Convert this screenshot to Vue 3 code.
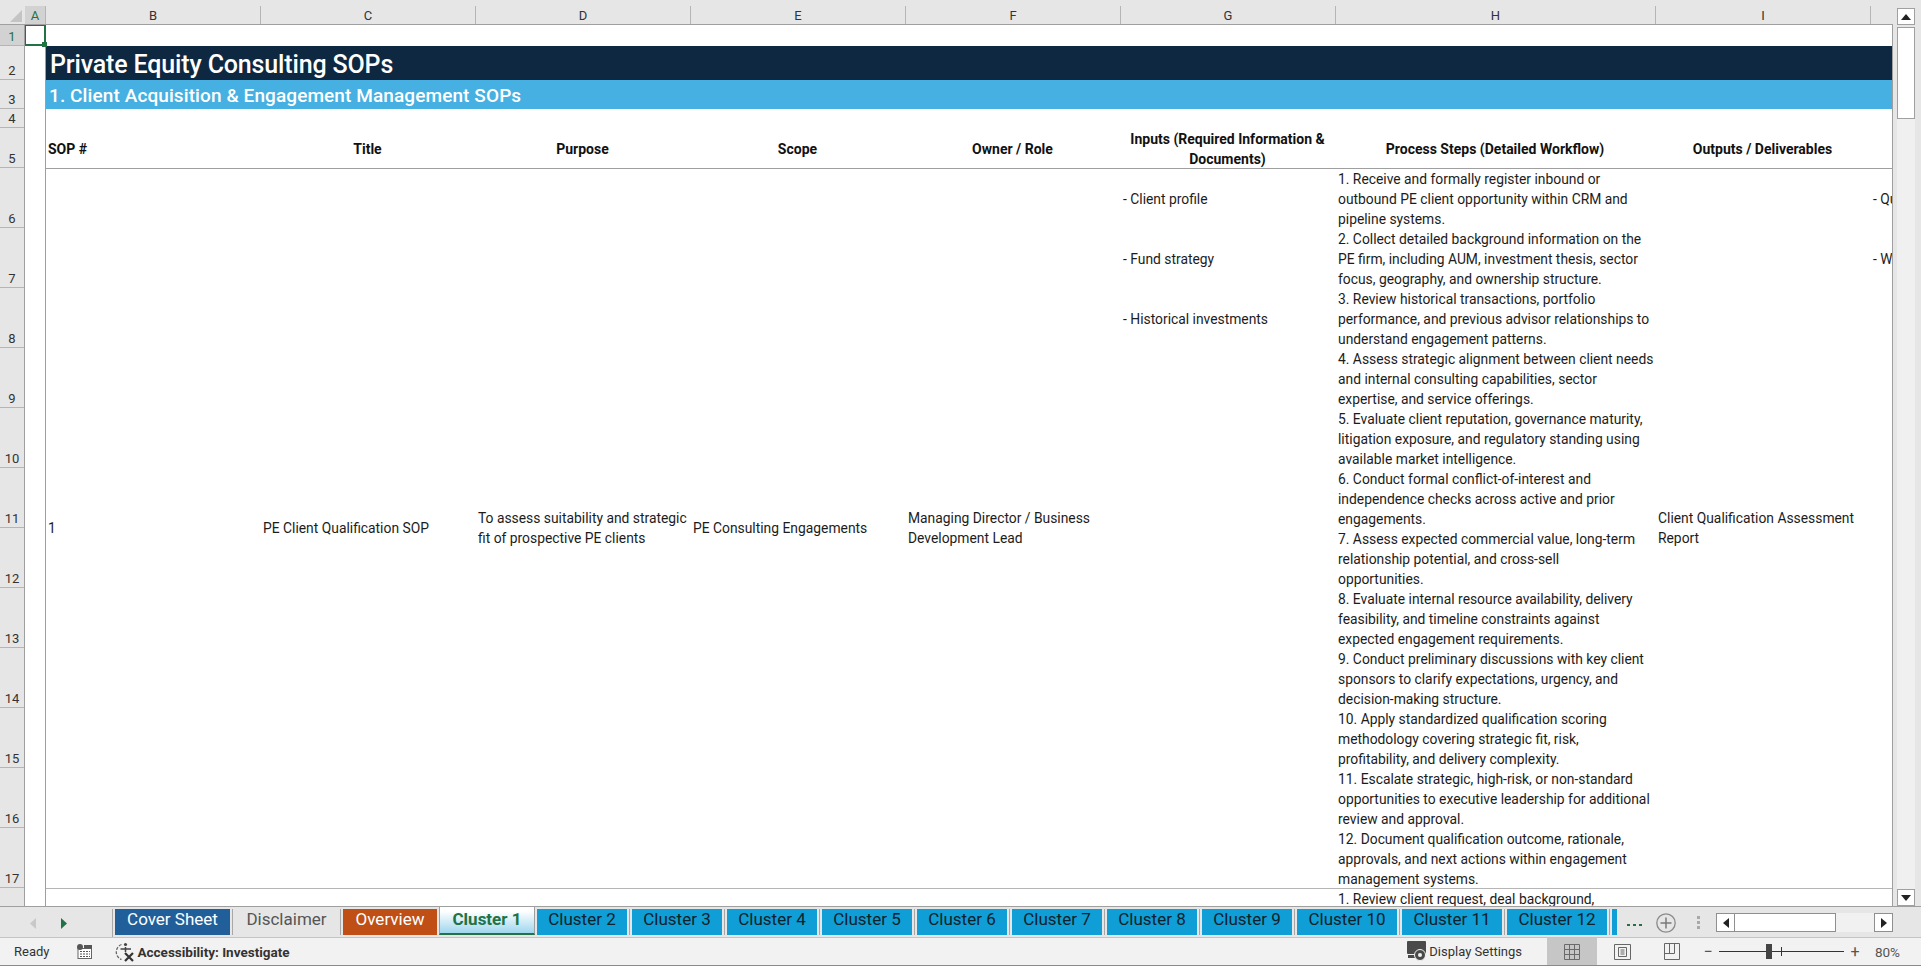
<template>
  <div class="excel">
    <div class="top">
      <div class="grid-area">
        <!-- column letters -->
        <div class="col-head">
          <div class="corner"><span class="corner-tri"></span></div>
          <div
            v-for="c in columns"
            :key="c.name"
            class="col-label"
            :class="{ on: c.name === 'A' }"
            :style="{ width: c.width + 'px' }"
          >{{ c.name }}</div>
        </div>

        <div class="body">
          <!-- row numbers -->
          <div class="row-head">
            <div
              v-for="r in rows"
              :key="r.n"
              class="row-label"
              :class="{ on: r.n === 1 }"
              :style="{ height: r.h + 'px' }"
            >{{ r.n }}</div>
          </div>

          <div class="sheet">
            <div class="selected"><span class="handle"></span></div>

            <div class="spacer-a"></div>
            <div class="main">
              <div class="gap-top"></div>
              <div class="title">Private Equity Consulting SOPs</div>
              <div class="subtitle">1. Client Acquisition &amp; Engagement Management SOPs</div>
              <div class="gap-mid"></div>

              <div class="table-head">
                <div class="th left">SOP #</div>
                <div class="th">Title</div>
                <div class="th">Purpose</div>
                <div class="th">Scope</div>
                <div class="th">Owner / Role</div>
                <div class="th">Inputs (Required Information &amp; Documents)</div>
                <div class="th">Process Steps (Detailed Workflow)</div>
                <div class="th">Outputs / Deliverables</div>
                <div class="th"></div>
              </div>

              <div class="record">
                <div class="td">1</div>
                <div class="td">PE Client Qualification SOP</div>
                <div class="td nowrap">To assess suitability and strategic<br />fit of prospective PE clients</div>
                <div class="td">PE Consulting Engagements</div>
                <div class="td">Managing Director / Business Development Lead</div>
                <div class="td stack">
                  <div v-for="i in inputs" :key="i" class="stack-row">{{ i }}</div>
                </div>
                <div class="td steps">
                  <div v-for="(l, idx) in steps" :key="idx" class="step-line">{{ l }}</div>
                </div>
                <div class="td">Client Qualification Assessment Report</div>
                <div class="td stack clip">
                  <div v-for="o in outputs" :key="o" class="stack-row">{{ o }}</div>
                </div>
              </div>

              <div class="record next">
                <div class="td steps-next">1. Review client request, deal background,</div>
              </div>
            </div>
          </div>
        </div>
      </div>

      <!-- vertical scrollbar -->
      <div class="vscroll">
        <div class="vbtn"><svg width="10" height="6" viewBox="0 0 10 6"><path d="M5 0 L10 6 H0 Z" fill="#222" /></svg></div>
        <div class="vthumb"></div>
        <div class="vtrack"></div>
        <div class="vbtn"><svg width="10" height="6" viewBox="0 0 10 6"><path d="M0 0 H10 L5 6 Z" fill="#222" /></svg></div>
      </div>
    </div>

    <!-- sheet tabs -->
    <div class="tabbar">
      <div class="tab-nav">
        <svg width="6" height="11" viewBox="0 0 6 11"><path d="M6 0 V11 L0 5.5 Z" fill="#c8c8c8" /></svg>
        <svg width="6" height="11" viewBox="0 0 6 11"><path d="M0 0 V11 L6 5.5 Z" fill="#217346" /></svg>
      </div>
      <div class="tabs">
        <div
          v-for="t in tabs"
          :key="t.name"
          class="tab"
          :class="t.kind"
          :style="{ width: t.width + 'px' }"
        >{{ t.name }}</div>
        <div class="tab sliver"></div>
      </div>
      <div class="ellipsis"><i></i><i></i><i></i></div>
      <svg class="add" width="20" height="20" viewBox="0 0 20 20">
        <circle cx="10" cy="10" r="9.2" fill="none" stroke="#8a8a8a" stroke-width="1.3" />
        <path d="M10 4.5 V15.5 M4.5 10 H15.5" stroke="#7a7a7a" stroke-width="1.5" />
      </svg>
      <div class="dots"><i></i><i></i><i></i></div>
      <div class="hscroll">
        <div class="hbtn"><svg width="6" height="10" viewBox="0 0 6 10"><path d="M6 0 V10 L0 5 Z" fill="#222" /></svg></div>
        <div class="hthumb"></div>
        <div class="htrack"></div>
        <div class="hbtn"><svg width="6" height="10" viewBox="0 0 6 10"><path d="M0 0 V10 L6 5 Z" fill="#222" /></svg></div>
      </div>
    </div>

    <!-- status bar -->
    <div class="status">
      <span class="ready">Ready</span>
      <svg class="macro" width="15" height="15" viewBox="0 0 15 15">
        <rect x="1" y="4.5" width="13.5" height="10" fill="#fff" stroke="#666" />
        <circle cx="3" cy="3" r="3" fill="#555" />
        <rect x="7" y="1" width="8" height="3.5" fill="#555" />
        <path d="M3 7.5 H13 M3 10 H13 M3 12.5 H13" stroke="#555" stroke-dasharray="2 1" />
      </svg>
      <svg class="access" width="21" height="20" viewBox="0 0 21 20">
        <path d="M6.5 2.5 A8 8 0 0 0 6.5 17.5" fill="none" stroke="#666" stroke-width="1.3" stroke-dasharray="3 1.4" />
        <circle cx="10.5" cy="2.5" r="1.6" fill="#444" />
        <path d="M5.5 7 H16 M10.5 5 V10" stroke="#444" stroke-width="1.5" />
        <path d="M10 11 L18 19 M18 11 L10 19" stroke="#333" stroke-width="2.2" />
      </svg>
      <span class="access-text">Accessibility: Investigate</span>

      <div class="status-right">
        <svg class="display" width="20" height="21" viewBox="0 0 20 21">
          <rect x="0" y="0" width="19" height="13" rx="1" fill="#4a4a4a" />
          <rect x="1" y="14" width="7" height="3" fill="#4a4a4a" />
          <circle cx="13" cy="14" r="5.5" fill="#4a4a4a" stroke="#f2f2f2" />
          <circle cx="13" cy="14" r="2" fill="#f2f2f2" />
        </svg>
        <span class="display-text">Display Settings</span>
        <div class="view on">
          <svg width="16" height="16" viewBox="0 0 16 16"><path d="M.5.5h15v15H.5zM5.5.5v15M10.5.5v15M.5 5.5h15M.5 10.5h15" fill="none" stroke="#6a6a6a" /></svg>
        </div>
        <div class="view">
          <svg width="17" height="16" viewBox="0 0 17 16"><path d="M.5.5h16v15H.5z" fill="none" stroke="#666" /><path d="M4.5 3.5h8v9h-8zM6.5 6h4M6.5 8h4M6.5 10h4" fill="none" stroke="#666" /></svg>
        </div>
        <div class="view">
          <svg width="16" height="17" viewBox="0 0 16 17"><path d="M.5.5h15v16H.5zM.5 10.5h10M5.5.5v10M10.5.5v10" fill="none" stroke="#666" /></svg>
        </div>
        <div class="zoom-slider">
          <span class="zbtn">&minus;</span>
          <div class="ztrack"><span class="ztick"></span><span class="zthumb"></span></div>
          <span class="zbtn">+</span>
        </div>
        <span class="zoom-val">80%</span>
      </div>
    </div>
  </div>
</template>

<script setup>
const columns = [
  { name: 'A', width: 21 },
  { name: 'B', width: 215 },
  { name: 'C', width: 215 },
  { name: 'D', width: 215 },
  { name: 'E', width: 215 },
  { name: 'F', width: 215 },
  { name: 'G', width: 215 },
  { name: 'H', width: 320 },
  { name: 'I', width: 215 }
]

const rows = [
  { n: 1, h: 21 },
  { n: 2, h: 34 },
  { n: 3, h: 29 },
  { n: 4, h: 19 },
  { n: 5, h: 40 },
  ...[6, 7, 8, 9, 10, 11, 12, 13, 14, 15, 16, 17].map((n) => ({ n, h: 60 }))
]

const inputs = ['- Client profile', '- Fund strategy', '- Historical investments']
const outputs = ['- Qualification', '- Win']

const steps = [
  '1. Receive and formally register inbound or',
  'outbound PE client opportunity within CRM and',
  'pipeline systems.',
  '2. Collect detailed background information on the',
  'PE firm, including AUM, investment thesis, sector',
  'focus, geography, and ownership structure.',
  '3. Review historical transactions, portfolio',
  'performance, and previous advisor relationships to',
  'understand engagement patterns.',
  '4. Assess strategic alignment between client needs',
  'and internal consulting capabilities, sector',
  'expertise, and service offerings.',
  '5. Evaluate client reputation, governance maturity,',
  'litigation exposure, and regulatory standing using',
  'available market intelligence.',
  '6. Conduct formal conflict-of-interest and',
  'independence checks across active and prior',
  'engagements.',
  '7. Assess expected commercial value, long-term',
  'relationship potential, and cross-sell',
  'opportunities.',
  '8. Evaluate internal resource availability, delivery',
  'feasibility, and timeline constraints against',
  'expected engagement requirements.',
  '9. Conduct preliminary discussions with key client',
  'sponsors to clarify expectations, urgency, and',
  'decision-making structure.',
  '10. Apply standardized qualification scoring',
  'methodology covering strategic fit, risk,',
  'profitability, and delivery complexity.',
  '11. Escalate strategic, high-risk, or non-standard',
  'opportunities to executive leadership for additional',
  'review and approval.',
  '12. Document qualification outcome, rationale,',
  'approvals, and next actions within engagement',
  'management systems.'
]

const tabs = [
  { name: 'Cover Sheet', width: 115, kind: 'navy' },
  { name: 'Disclaimer', width: 103, kind: 'plain' },
  { name: 'Overview', width: 94, kind: 'rust' },
  { name: 'Cluster 1', width: 96, kind: 'active' },
  ...[2, 3, 4, 5, 6, 7, 8, 9].map((n) => ({ name: 'Cluster ' + n, width: 90, kind: 'blue' })),
  { name: 'Cluster 10', width: 100, kind: 'blue' },
  { name: 'Cluster 11', width: 100, kind: 'blue' },
  { name: 'Cluster 12', width: 100, kind: 'blue' }
]
</script>

<style>
html, body {
  margin: 0;
  background: #fff;
  overflow: hidden;
}
</style>

<style scoped>
.excel {
  width: 1921px;
  height: 966px;
  display: flex;
  flex-direction: column;
  overflow: hidden;
  font-family: Roboto, "Liberation Sans", sans-serif;
  color: #1a1a1a;
}
.top {
  height: 906px;
  flex: none;
  display: flex;
}
.grid-area {
  width: 1893px;
  flex: none;
  display: flex;
  flex-direction: column;
}

/* ====== column letters ====== */
.col-head {
  height: 25px;
  flex: none;
  display: flex;
  padding-top: 6px;
  background: #e6e6e6;
  border-bottom: 1px solid #9f9f9f;
  box-sizing: border-box;
}
.corner {
  width: 25px;
  position: relative;
  flex: none;
}
.corner-tri {
  position: absolute;
  right: 3px;
  bottom: 2px;
  width: 0;
  height: 0;
  border-style: solid;
  border-width: 0 0 12px 12px;
  border-color: transparent transparent #c4c4c4 transparent;
}
.col-label {
  flex: none;
  box-sizing: border-box;
  border-right: 1px solid #b5b5b5;
  text-align: center;
  font-size: 13px;
  line-height: 19px;
  color: #333;
}
.col-label.on {
  background: #d2d2d2;
  color: #217346;
}

/* ====== body ====== */
.body {
  flex: 1;
  min-height: 0;
  display: flex;
  overflow: hidden;
}
.row-head {
  width: 25px;
  flex: none;
  background: #e6e6e6;
  border-right: 1px solid #9f9f9f;
  box-sizing: border-box;
  overflow: hidden;
}
.row-label {
  box-sizing: border-box;
  border-bottom: 1px solid #b5b5b5;
  display: flex;
  align-items: flex-end;
  justify-content: center;
  font-size: 13px;
  line-height: 16px;
  color: #333;
}
.row-label.on {
  background: #d2d2d2;
  color: #217346;
}

.sheet {
  flex: 1;
  min-width: 0;
  display: flex;
  position: relative;
  background: #fff;
  border-right: 1px solid #9f9f9f;
  box-sizing: border-box;
  overflow: hidden;
}
.selected {
  position: absolute;
  left: -1px;
  top: -1px;
  width: 22px;
  height: 22px;
  box-sizing: border-box;
  border: 2px solid #217346;
  z-index: 3;
}
.handle {
  position: absolute;
  right: -3px;
  bottom: -3px;
  width: 5px;
  height: 5px;
  background: #217346;
}
.spacer-a {
  width: 21px;
  flex: none;
  border-right: 1px solid #9f9f9f;
  box-sizing: border-box;
}
.main {
  flex: 1;
  min-width: 0;
  overflow: hidden;
}
.gap-top {
  height: 21px;
}
.title {
  height: 34px;
  background: #0e2841;
  color: #fff;
  font-size: 25px;
  font-weight: 500;
  line-height: 38px;
  padding-left: 4px;
  letter-spacing: -0.15px;
}
.subtitle {
  height: 29px;
  background: #45b0e1;
  color: #fff;
  font-size: 19px;
  font-weight: 500;
  line-height: 32px;
  padding-left: 3px;
  letter-spacing: 0.1px;
}
.gap-mid {
  height: 19px;
}

/* ====== table ====== */
.table-head,
.record {
  display: grid;
  grid-template-columns: repeat(6, 215px) 320px 215px 22px;
}
.table-head {
  height: 41px;
  border-bottom: 1px solid #9f9f9f;
  box-sizing: border-box;
}
.th {
  display: flex;
  align-items: center;
  justify-content: center;
  text-align: center;
  font-size: 14px;
  font-weight: 700;
  line-height: 20px;
  color: #111;
  padding: 1px 3px 0 1px;
}
.th.left {
  justify-content: flex-start;
  padding-left: 2px;
}
.record {
  height: 719px;
  border-bottom: 1px solid #b5b5b5;
}
.td {
  display: flex;
  align-items: center;
  font-size: 13.85px;
  line-height: 20px;
  padding: 0 2px 2px;
  color: #1c1c1c;
}
.nowrap {
  display: block;
  align-self: center;
  white-space: nowrap;
}
.stack {
  display: block;
  padding-bottom: 0;
}
.stack-row {
  height: 60px;
  line-height: 60px;
  white-space: nowrap;
}
.clip {
  overflow: hidden;
}
.steps {
  display: block;
  padding-bottom: 0;
}
.step-line {
  height: 20px;
  white-space: nowrap;
}
.next {
  height: 18px;
}
.steps-next {
  grid-column: 7;
  height: 20px;
  white-space: nowrap;
}

/* ====== vertical scrollbar ====== */
.vscroll {
  flex: 1;
  background: #e6e6e6;
  display: flex;
  flex-direction: column;
  padding: 8px 6px 0 4px;
}
.vbtn {
  height: 17px;
  flex: none;
  background: #fff;
  border: 1px solid #a0a0a0;
  box-sizing: border-box;
  display: flex;
  align-items: center;
  justify-content: center;
}
.vthumb {
  height: 92px;
  flex: none;
  background: #fff;
  border: 1px solid #a0a0a0;
  box-sizing: border-box;
  margin-top: 2px;
}
.vtrack {
  flex: 1;
  background: #f0f0f0;
}

/* ====== tabs ====== */
.tabbar {
  height: 32px;
  flex: none;
  box-sizing: border-box;
  display: flex;
  align-items: flex-start;
  background: #e6e6e6;
  border-top: 1px solid #9f9f9f;
  border-bottom: 1px solid #c4c4c4;
}
.tab-nav {
  width: 113px;
  flex: none;
  height: 28px;
  margin-top: 2px;
  display: flex;
  align-items: center;
  justify-content: center;
  gap: 25px;
  padding-right: 15px;
  box-sizing: border-box;
  border-right: 1px solid #a8a8a8;
}
.tabs {
  display: flex;
  flex: none;
  width: 1504px;
  overflow: hidden;
  height: 30px;
  padding: 2px 0 0 2px;
  box-sizing: border-box;
}
.tab {
  flex: none;
  height: 26px;
  box-sizing: border-box;
  text-align: center;
  font-size: 17px;
  line-height: 20px;
  margin-right: 5px;
  position: relative;
}
.tab::after {
  content: "";
  position: absolute;
  right: -3px;
  top: 0;
  width: 1px;
  height: 26px;
  background: #a8a8a8;
}
.tab.navy { background: #215f9a; color: #fff; }
.tab.plain { color: #555; background: transparent; }
.tab.rust { background: #c04f15; color: #fff; margin-right: 2px; }
.tab.rust::after { display: none; }
.tab.blue { background: #0f9ed5; color: #10222c; }
.tab.active {
  background: linear-gradient(180deg, #fff 0, #fff 4px, #9fd6ee 100%);
  color: #217346;
  font-weight: 700;
  margin-top: -2px;
  margin-right: 2px;
  height: 28px;
  line-height: 24px;
  border-left: 1px solid #9f9f9f;
  border-right: 1px solid #9f9f9f;
  border-bottom: 2px solid #217346;
}
.tab.active::after { display: none; }
.tab.sliver {
  width: 20px;
  background: #0f9ed5;
}
.ellipsis {
  width: 34px;
  height: 30px;
  flex: none;
  display: flex;
  justify-content: center;
  align-items: flex-end;
  gap: 3px;
  padding-bottom: 11px;
  box-sizing: border-box;
}
.ellipsis i {
  width: 3px;
  height: 2px;
  background: #217346;
}
.add {
  flex: none;
  margin: 6px 21px 0 5px;
}
.dots {
  display: flex;
  flex-direction: column;
  gap: 2px;
  margin-top: 9px;
  flex: none;
}
.dots i {
  width: 3px;
  height: 3px;
  background: #a9a9a9;
}
.hscroll {
  flex: none;
  margin: 6px 0 0 16px;
  height: 19px;
  width: 177px;
  display: flex;
  background: #f1f1f1;
}
.hbtn {
  width: 19px;
  flex: none;
  background: #fff;
  border: 1px solid #8f8f8f;
  box-sizing: border-box;
  display: flex;
  align-items: center;
  justify-content: center;
}
.hthumb {
  width: 101px;
  flex: none;
  background: #fff;
  border: 1px solid #8f8f8f;
  border-left: 0;
  box-sizing: border-box;
}
.htrack {
  flex: 1;
}

/* ====== status bar ====== */
.status {
  flex: 1;
  display: flex;
  align-items: center;
  background: #f2f2f2;
  font-size: 13.5px;
  color: #333;
  border-bottom: 1px solid #8a8a8a;
  box-sizing: border-box;
}
.ready {
  margin-left: 14px;
  font-size: 13px;
}
.macro {
  margin-left: 28px;
}
.access {
  margin-left: 23px;
}
.access-text {
  font-weight: 700;
  margin-left: 1px;
}
.status-right {
  margin-left: auto;
  display: flex;
  align-items: center;
  height: 100%;
}
.display-text {
  margin-left: 2px;
  margin-right: 25px;
  font-size: 13px;
}
.view {
  width: 50px;
  height: 100%;
  display: flex;
  align-items: center;
  justify-content: center;
}
.view.on {
  background: #c6c6c6;
}
.zoom-slider {
  display: flex;
  align-items: center;
  gap: 6px;
  margin-left: 6px;
}
.zbtn {
  width: 10px;
  text-align: center;
  font-size: 16px;
  color: #555;
}
.ztrack {
  width: 125px;
  height: 1px;
  background: #333;
  position: relative;
}
.ztick {
  position: absolute;
  left: 62px;
  top: -4px;
  width: 1px;
  height: 9px;
  background: #333;
}
.zthumb {
  position: absolute;
  left: 47px;
  top: -7px;
  width: 6px;
  height: 15px;
  background: #444;
}
.zoom-val {
  width: 40px;
  text-align: right;
  margin-right: 21px;
  color: #555;
}
</style>
